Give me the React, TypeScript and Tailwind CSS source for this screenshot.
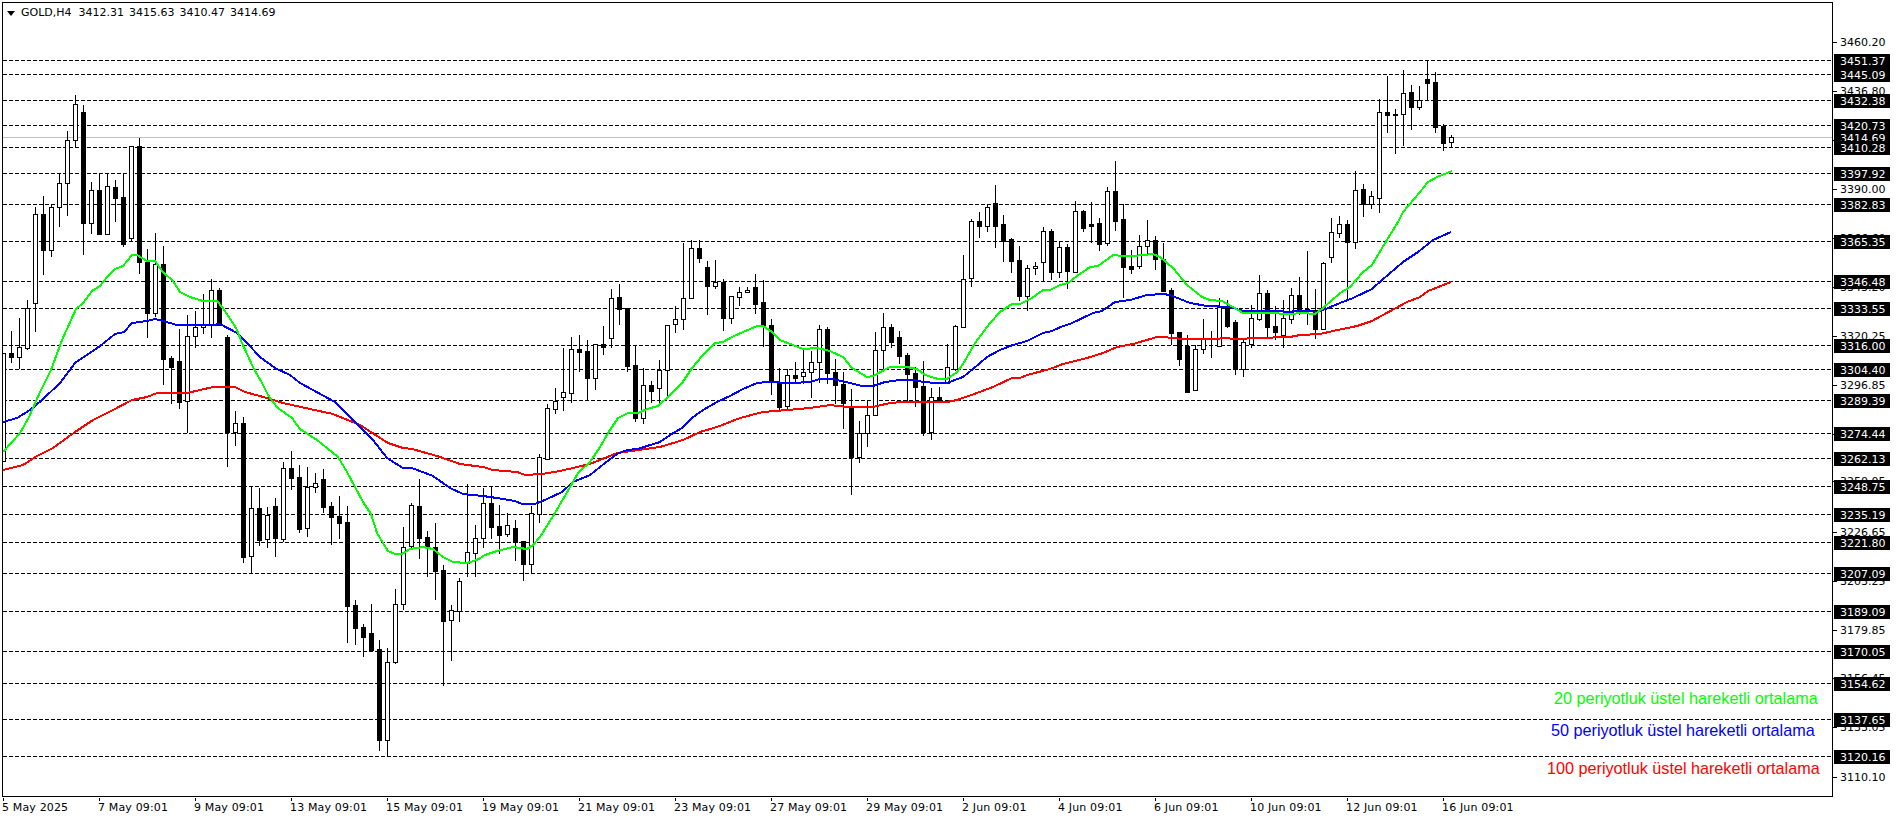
// MT4 style GOLD,H4 chart. All y values below are pixel rows on the page.
type Candle = [number, number, number, number, number]; // white?, wick top, body top, body bottom, wick bottom

const candles: Candle[] = [
	[1,353,353,461,461],[0,331,353,357,362],[1,318,347,357,368],[1,300,308,348,349],[1,207,214,303,331],
	[0,196,214,250,274],[1,205,207,250,256],[1,173,183,207,226],[1,131,140,183,215],[1,95,104,140,147],
	[0,105,112,223,254],[1,182,190,223,233],[0,173,190,234,234],[1,173,186,234,234],[0,180,187,198,221],
	[0,173,197,244,246],[1,146,146,238,240],[0,138,146,262,273],[0,249,262,313,337],[1,233,264,313,316],
	[0,246,264,359,384],[0,356,358,367,403],[0,329,361,402,408],[1,315,336,401,432],[1,311,327,336,347],
	[1,294,325,327,333],[1,279,290,325,337],[0,288,290,325,325],[0,335,337,432,466],[1,411,423,432,445],
	[0,417,423,557,562],[1,487,508,556,573],[0,488,508,540,545],[1,507,515,539,547],[0,498,506,538,556],
	[1,462,468,539,541],[0,451,468,478,489],[0,465,477,529,532],[1,467,487,528,536],[1,473,483,487,492],
	[0,469,479,507,512],[0,502,506,517,544],[0,496,516,523,538],[0,506,522,606,642],[0,600,605,628,644],
	[0,624,627,637,656],[0,604,633,650,650],[0,640,649,740,750],[1,648,662,740,756],[1,589,604,662,663],
	[1,527,547,604,609],[1,503,505,546,547],[0,479,506,538,558],[0,531,537,547,576],[0,523,547,571,599],
	[0,565,570,621,685],[1,605,610,620,660],[1,578,581,611,621],[1,484,552,563,576],[1,525,538,553,576],
	[1,488,503,538,547],[0,486,503,527,538],[0,505,526,535,553],[1,513,525,534,536],[0,520,528,542,560],
	[0,541,541,564,580],[1,506,513,564,573],[1,454,457,514,522],[1,404,408,459,459],[1,388,401,409,413],
	[1,348,392,397,410],[1,337,349,393,402],[0,335,349,352,371],[0,340,351,378,399],[1,344,344,378,389],
	[0,326,344,347,354],[1,289,298,338,347],[0,284,297,309,324],[0,308,308,366,371],[0,346,365,418,421],
	[1,368,385,418,423],[0,381,385,391,402],[1,360,370,388,403],[1,325,325,370,396],[1,306,319,324,332],
	[1,243,298,319,329],[1,240,248,298,298],[0,240,248,258,262],[0,261,267,286,314],[1,260,282,286,288],
	[0,279,282,318,330],[1,296,296,318,323],[1,287,292,297,305],[1,287,290,292,292],[0,274,287,304,313],
	[0,280,302,325,346],[0,319,325,382,394],[0,368,382,407,410],[1,369,375,406,409],[0,362,375,378,382],
	[1,350,372,376,383],[1,351,362,372,397],[1,325,329,362,382],[0,327,329,373,383],[0,359,372,385,403],
	[0,372,384,403,428],[0,389,407,457,494],[1,421,433,457,462],[1,400,415,433,446],[1,332,350,415,415],
	[1,313,327,350,369],[0,324,327,342,347],[0,331,337,356,363],[0,353,355,374,400],[0,367,373,387,406],
	[0,361,386,432,435],[1,388,397,432,439],[0,387,397,402,402],[1,344,367,383,383],[1,325,326,369,370],
	[1,255,279,327,327],[1,219,221,278,286],[0,212,221,226,237],[1,204,207,226,231],[0,185,203,226,247],
	[0,215,224,241,261],[0,238,239,261,272],[0,246,260,296,300],[1,265,268,296,310],[1,262,266,268,274],
	[1,227,231,262,281],[0,229,231,272,279],[1,241,247,272,277],[0,244,247,271,288],[1,201,211,272,272],
	[0,210,211,228,231],[0,202,224,226,242],[0,218,223,244,250],[1,187,191,243,245],[0,161,191,221,230],
	[0,204,219,267,297],[0,250,266,269,273],[1,235,246,266,268],[1,220,240,246,253],[0,236,240,259,269],
	[0,243,259,291,291],[0,288,290,333,344],[0,332,332,359,365],[0,335,346,392,392],[1,345,349,390,390],
	[1,319,339,349,353],[0,331,338,339,357],[1,298,307,346,346],[0,300,307,326,327],[0,320,322,369,374],
	[1,339,342,369,376],[1,305,318,344,347],[1,275,293,319,320],[0,290,293,327,337],[0,306,326,332,339],
	[1,300,318,335,347],[1,288,295,319,323],[0,277,295,310,314],[0,251,309,311,324],[0,289,310,329,338],
	[1,262,263,329,329],[1,218,232,257,262],[1,216,224,233,237],[0,220,224,242,299],[1,171,190,242,248],
	[0,184,189,204,216],[1,191,196,204,208],[1,99,112,198,212],[0,76,112,115,132],[0,109,114,115,153],
	[1,70,93,114,145],[0,85,92,107,129],[1,86,100,107,109],[0,60,79,83,100],[0,72,82,127,132],
	[0,124,126,143,150],[1,135,137,142,147],
];

const ema20 = "3,452 20,433 29,417 40,392 51,370 62,340 76,309 83,303 92,291 100,286 107,277 115,269 123,266 132,255 137,255 147,261 155,261 163,272 173,281 180,292 190,297 203,301 217,301 222,307 233,323 237,330 242,343 253,367 262,383 268,395 273,402 278,408 292,418 300,429 317,440 327,448 338,457 347,472 355,487 363,502 371,514 377,533 383,543 388,551 395,554 402,554 410,549 423,547 433,549 443,557 453,562 467,563 477,560 485,555 497,551 513,547 527,549 533,545 540,537 545,529 555,513 570,487 578,473 590,462 600,447 608,433 618,418 628,413 638,413 647,409 658,406 670,395 682,383 692,368 702,356 715,343 723,342 732,337 743,332 757,326 763,326 772,332 780,340 793,345 803,349 817,348 830,351 843,357 852,368 867,377 873,376 890,367 907,367 917,369 925,375 938,379 947,379 957,372 963,364 975,343 990,323 1000,312 1012,304 1020,304 1032,298 1043,290 1050,290 1060,285 1068,283 1077,276 1090,267 1098,266 1113,255 1123,256 1133,256 1153,254 1160,257 1173,268 1187,285 1202,297 1210,300 1222,301 1233,307 1243,313 1267,313 1290,314 1303,313 1315,314 1323,308 1340,293 1350,287 1363,272 1372,265 1382,248 1398,222 1403,212 1420,192 1428,182 1437,177 1452,171";
const ema50 = "3,422 17,418 30,410 42,400 60,383 75,363 100,346 115,334 124,332 132,323 147,321 155,319 163,321 177,325 213,325 220,324 237,333 247,343 260,357 275,368 290,375 300,383 313,390 335,402 360,427 373,440 387,458 403,468 412,468 433,476 450,488 463,494 483,496 497,498 515,501 522,504 535,504 547,499 562,492 573,482 590,475 605,463 617,454 627,450 638,449 647,446 660,442 670,435 682,428 692,418 703,410 717,402 730,396 743,389 757,383 767,382 793,383 810,382 820,379 833,379 850,383 862,386 873,386 885,382 900,380 915,380 923,382 937,383 947,383 963,377 973,369 987,357 1000,350 1013,345 1027,341 1043,333 1052,331 1063,326 1070,324 1093,313 1102,311 1115,302 1130,300 1147,295 1163,294 1170,295 1190,303 1207,306 1230,307 1243,311 1275,311 1290,312 1295,311 1307,311 1318,312 1328,308 1340,303 1353,298 1372,289 1382,280 1403,262 1418,252 1433,240 1451,232";
const ema100 = "3,470 23,465 37,456 53,448 75,432 93,420 113,410 132,400 147,397 157,393 187,393 213,387 235,387 245,392 267,398 283,403 310,409 333,414 360,425 388,443 403,448 412,449 437,456 460,464 483,467 493,470 517,472 525,475 542,474 560,471 590,464 617,453 638,450 660,447 683,440 700,432 717,427 740,418 763,412 787,410 810,408 830,405 847,407 873,407 890,403 903,402 947,402 957,400 977,393 993,387 1012,378 1020,378 1027,375 1050,369 1063,364 1087,358 1103,353 1117,347 1133,344 1157,337 1163,337 1183,339 1217,339 1223,338 1237,339 1257,338 1290,337 1300,335 1320,334 1333,331 1357,326 1372,321 1383,315 1407,302 1420,297 1428,291 1451,282";

// levels: [row, price]
const levels: [number, string][] = [
	[60,"3451.37"],[74,"3445.09"],[100,"3432.38"],[125,"3420.73"],[147,"3410.28"],[173,"3397.92"],
	[204,"3382.83"],[241,"3365.35"],[281,"3346.48"],[308,"3333.55"],[345,"3316.00"],[369,"3304.40"],
	[400,"3289.39"],[433,"3274.44"],[458,"3262.13"],[486,"3248.75"],[514,"3235.19"],[542,"3221.80"],
	[573,"3207.09"],[611,"3189.09"],[651,"3170.05"],[683,"3154.62"],[719,"3137.65"],[756,"3120.16"],
];

const scale: [number, string][] = [
	[42,"3460.20"],[91,"3436.80"],[140,"3413.40"],[189,"3390.00"],[238,"3366.60"],[287,"3343.20"],
	[336,"3320.25"],[385,"3296.85"],[434,"3273.45"],[481,"3250.05"],[532,"3226.65"],[581,"3203.25"],
	[630,"3179.85"],[678,"3156.45"],[727,"3133.05"],[777,"3110.10"],
];

const times = [
	"5 May 2025","7 May 09:01","9 May 09:01","13 May 09:01","15 May 09:01","19 May 09:01",
	"21 May 09:01","23 May 09:01","27 May 09:01","29 May 09:01","2 Jun 09:01","4 Jun 09:01",
	"6 Jun 09:01","10 Jun 09:01","12 Jun 09:01","16 Jun 09:01",
];

function ChartDrawing() {
	return (
		<svg className="absolute inset-0" width="1829" height="793" viewBox="3 3 1829 793" shapeRendering="crispEdges">
			{levels.map(([y, p]) => (
				<line key={p} x1="3" x2="1832" y1={y + 0.5} y2={y + 0.5} stroke="#000" strokeDasharray="4 2" />
			))}
			<line x1="3" x2="1832" y1="137.5" y2="137.5" stroke="#c0c0c0" />
			{candles.map(([white, wt, bt, bb, wb], i) => {
				const x = 3 + 8 * i;
				return (
					<g key={i}>
						<rect x={x} y={wt} width="1" height={wb - wt + 1} fill="#000" />
						{white ? (
							<rect x={x - 1.5} y={bt + 0.5} width="4" height={bb - bt} fill="#fff" stroke="#000" />
						) : (
							<rect x={x - 2} y={bt} width="5" height={Math.max(1, bb - bt + 1)} fill="#000" />
						)}
					</g>
				);
			})}
			<polyline points={ema100} fill="none" stroke="#ff0000" strokeWidth="2" />
			<polyline points={ema50} fill="none" stroke="#0000ff" strokeWidth="2" />
			<polyline points={ema20} fill="none" stroke="#00ff00" strokeWidth="2" />
		</svg>
	);
}

function PriceAxis() {
	return (
		<div className="relative h-[796px] w-[63px] font-['DejaVu_Sans',sans-serif] text-[11px] leading-[14px]">
			{scale.map(([y, p]) => (
				<div key={p} className="absolute left-0 flex items-center text-black" style={{ top: y - 9 }}>
					<span className="h-px w-[4px] bg-black" />
					<span className="ml-[3px] pt-px">{p}</span>
				</div>
			))}
			<div className="absolute left-px h-[14px] w-[56px] overflow-hidden bg-black pl-[6px] pt-px text-white" style={{ top: 137 - 8 }}>
				3414.69
			</div>
			{levels.map(([y, p]) => (
				<div key={p} className="absolute left-px h-[14px] w-[56px] overflow-hidden bg-black pl-[6px] pt-px text-white" style={{ top: y - 8 }}>
					{p}
				</div>
			))}
		</div>
	);
}

export default function App() {
	return (
		<div className="flex h-[820px] w-[1896px] flex-col overflow-hidden bg-white pl-[2px] pt-[2px]">
			<div className="flex">
				<div className="relative h-[795px] w-[1831px] shrink-0 border border-black">
					<ChartDrawing />
					<div className="absolute left-[4px] top-[8px] h-0 w-0 border-x-[4px] border-t-[5px] border-x-transparent border-t-black" />
					<div className="absolute left-[18px] top-[3px] flex gap-[5px] font-['DejaVu_Sans',sans-serif] text-[11px] leading-[14px] text-black">
						<span className="mr-[2px]">GOLD,H4</span>
						<span>3412.31</span>
						<span>3415.63</span>
						<span>3410.47</span>
						<span>3414.69</span>
					</div>
					<div className="absolute left-[1551px] top-[686px] font-['Liberation_Sans',sans-serif] text-[16.2px] leading-[18px] text-[#00ff00]">
						20 periyotluk üstel hareketli ortalama
					</div>
					<div className="absolute left-[1548px] top-[718px] font-['Liberation_Sans',sans-serif] text-[16.2px] leading-[18px] text-[#0000ff]">
						50 periyotluk üstel hareketli ortalama
					</div>
					<div className="absolute left-[1544px] top-[756px] font-['Liberation_Sans',sans-serif] text-[16.2px] leading-[18px] text-[#ff0000]">
						100 periyotluk üstel hareketli ortalama
					</div>
				</div>
				<PriceAxis />
			</div>
			<div className="flex font-['DejaVu_Sans',sans-serif] text-[11px] leading-[14px] tracking-[0.15px] text-black">
				{times.map((t) => (
					<div key={t} className="flex w-[96px] shrink-0 flex-col">
						<span className="ml-px h-[3px] w-px bg-black" />
						<span className="whitespace-nowrap">{t}</span>
					</div>
				))}
			</div>
		</div>
	);
}
